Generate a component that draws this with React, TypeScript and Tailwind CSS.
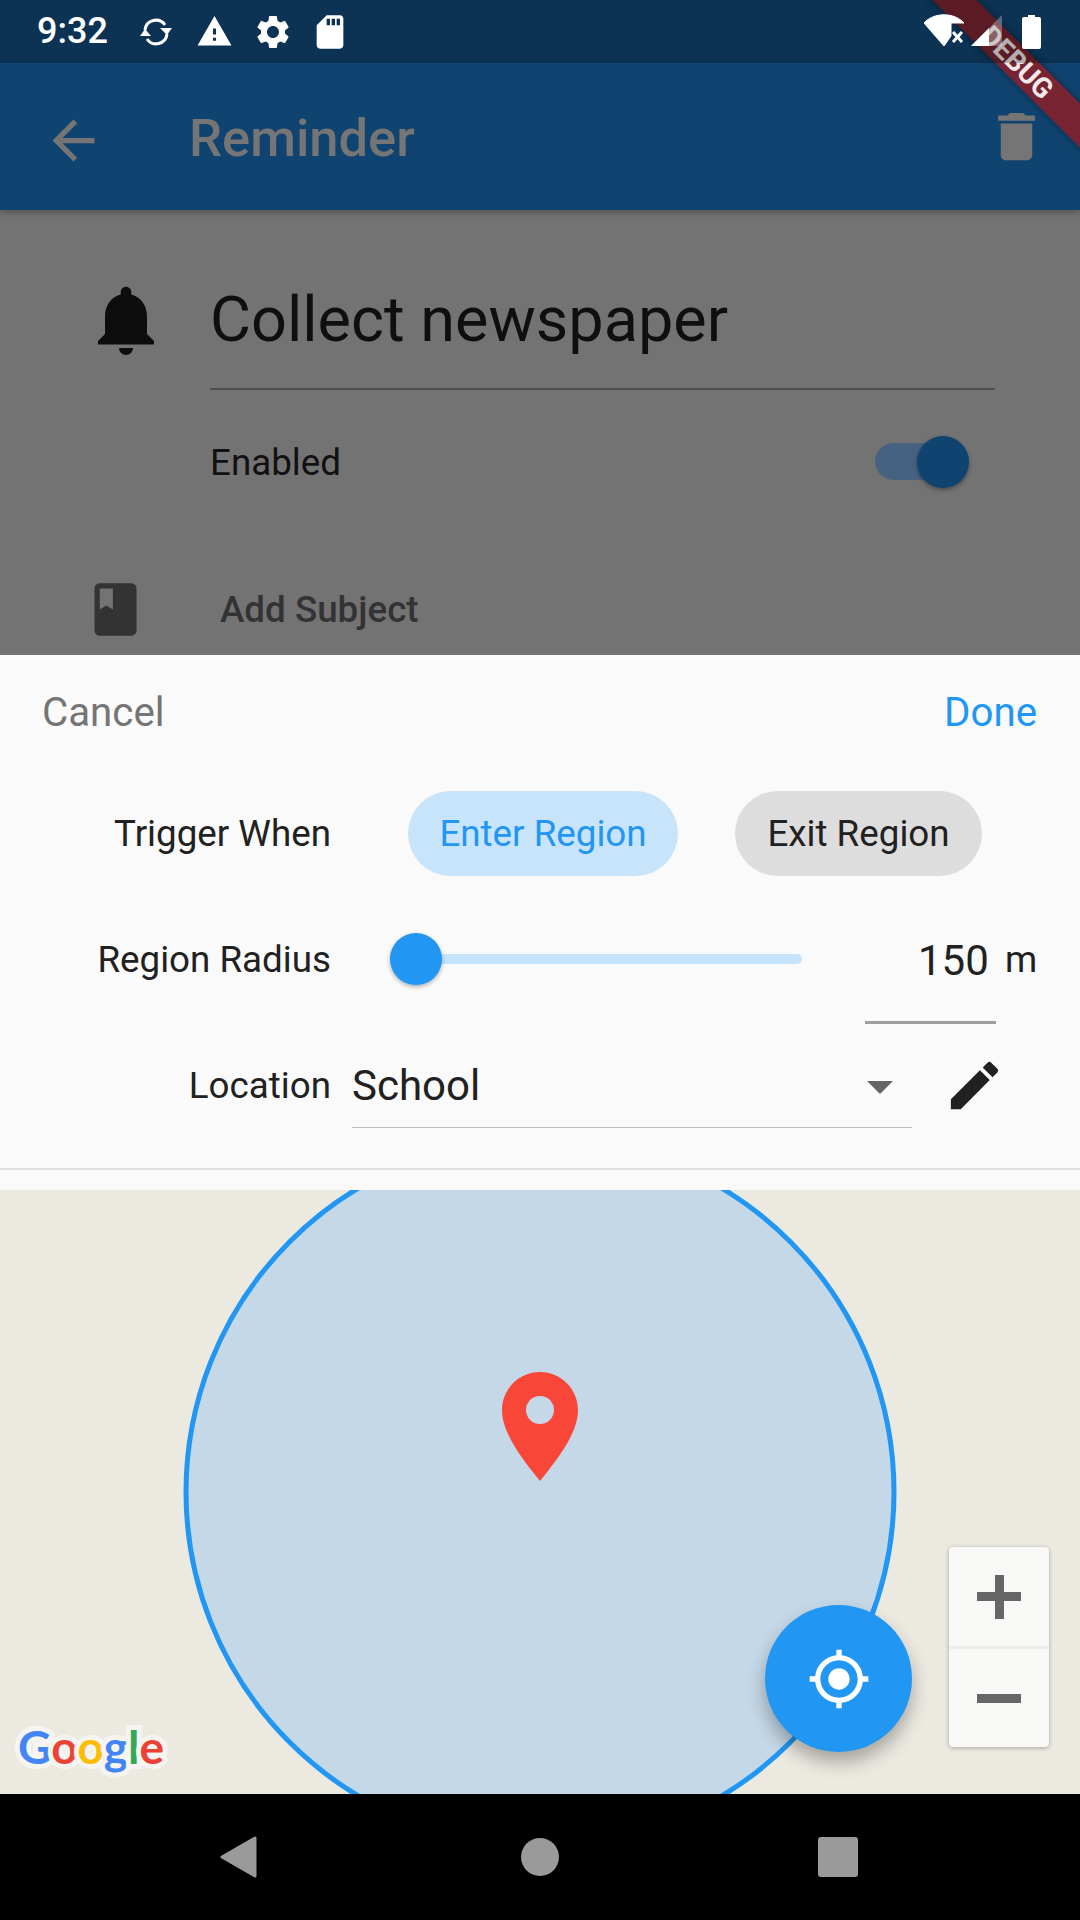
import { MdWarning, MdSettings, MdSdCard, MdArrowBack, MdDelete, MdNotifications, MdBook, MdEdit, MdMyLocation } from "react-icons/md";

const font = { fontFamily: "Roboto, sans-serif" };

function Pill({ label, active }: { label: string; active?: boolean }) {
  return (
    <div className={active ? "h-[85px] w-[270px] rounded-[43px] bg-[#c8e4fb] text-[#2196f3] flex items-center justify-center text-[36.75px]" : "h-[85px] w-[247px] rounded-[43px] bg-[#dddddd] text-[#212121] flex items-center justify-center text-[36.75px]"}>
      {label}
    </div>
  );
}

export default function App() {
  return (
    <div className="relative w-[1080px] h-[1920px] overflow-hidden bg-black flex flex-col" style={font}>
      {/* status bar */}
      <div className="h-[63px] shrink-0 bg-[#104470] flex items-center text-white pl-[37px] pr-[39px]">
        <div className="relative z-30 flex-1 flex items-center h-full">
          <span className="text-[36px] font-medium w-[103px] mt-[-1px]">9:32</span>
          <svg width="32" height="30" viewBox="0 0 32 30" fill="none">
            <path d="M5 13 A11 11 0 0 1 25 8" stroke="#fff" strokeWidth="3" />
            <path d="M20 11 H32 L27 18 Z" fill="#fff" />
            <path d="M27 17 A11 11 0 0 1 7 22" stroke="#fff" strokeWidth="3" />
            <path d="M0 19 H11 L5 12 Z" fill="#fff" />
          </svg>
          <MdWarning className="text-[37px] ml-[24px]" />
          <MdSettings className="text-[40px] ml-[20px]" />
          <MdSdCard className="text-[40px] ml-[17px]" />
          <div className="flex-1" />
          <svg width="40" height="33" viewBox="0 0 40 33" className="mt-[-3px]"><path d="M0 9 C10 -2 30 -2 40 9 L27 9 L27 22 L20 32 Z" fill="#fff" strokeLinejoin="round" stroke="#fff" strokeWidth="1" /><path d="M29 18 L38 28 M38 18 L29 28" stroke="#fff" strokeWidth="3" /></svg>
          <svg width="31" height="32" viewBox="0 0 31 32" className="ml-[7px] mt-[-1px]"><path d="M0 31 L31 0 V31 Z" fill="#fff" fillOpacity="0.3" /><path d="M0 31 L18 13 V31 Z" fill="#fff" /></svg>
          <svg width="19" height="34" viewBox="0 0 19 34" className="ml-[20px]"><path d="M6 0 H13 V2 H17 Q19 2 19 4 V32 Q19 34 17 34 H2 Q0 34 0 32 V4 Q0 2 2 2 H6 Z" fill="#fff" /></svg>
        </div>
      </div>
      {/* app bar */}
      <div className="h-[147px] shrink-0 bg-[#104470] flex items-center pl-[42px] pr-[32px] text-[#757575] relative z-10 shadow-[0_3px_6px_rgba(0,0,0,0.25)]">
        <MdArrowBack className="text-[63px] mt-[8px]" />
        <span className="ml-[84px] text-[52.5px] font-medium mt-[4px]">Reminder</span>
        <div className="flex-1" />
        <MdDelete className="text-[63px]" />
      </div>
      {/* body */}
      <div className="h-[445px] shrink-0 bg-[#737373] flex flex-col relative">
        <div className="flex items-start pl-[84px] pr-[85px]">
          <MdNotifications className="text-[84px] text-[#0d0d0d] shrink-0 mt-[68px]" />
          <div className="ml-[42px] flex-1 border-b-[2px] border-[#4f4f4f] h-[180px] text-[63px] text-[#0f0f0f] leading-[62px] pt-[79px]">Collect newspaper</div>
        </div>
        <div className="flex items-center pl-[210px] pr-[118px] mt-[27px] h-[88px]">
          <span className="text-[36.75px] text-[#111111] pt-[4px]">Enabled</span>
          <div className="flex-1" />
          <div className="relative w-[87px] h-[37px]">
            <div className="absolute left-0 top-0 w-[87px] h-[37px] rounded-[19px] bg-[#476280]" />
            <div className="absolute right-[-7px] top-[-7px] w-[52px] h-[52px] rounded-full bg-[#104470] shadow-[0_2px_4px_rgba(0,0,0,0.35)]" />
          </div>
        </div>
        <div className="flex items-center pl-[84px] mt-[73px] h-[63px] text-[#333333]">
          <MdBook className="text-[63px]" />
          <span className="ml-[73px] text-[36.75px] font-medium">Add Subject</span>
        </div>
      </div>
      {/* sheet */}
      <div className="h-[535px] shrink-0 bg-[#fafafa] flex flex-col">
        <div className="flex justify-between items-center pl-[42px] pr-[43px] pt-[2px] h-[114px] text-[40.25px] shrink-0">
          <span className="text-[#757575]">Cancel</span>
          <span className="text-[#2196f3]">Done</span>
        </div>
        <div className="flex items-center h-[85px] mt-[22px] shrink-0">
          <span className="w-[331px] text-right text-[36.75px] text-[#212121]">Trigger When</span>
          <div className="ml-[77px] flex gap-[57px]">
            <Pill label="Enter Region" active />
            <Pill label="Exit Region" />
          </div>
        </div>
        <div className="flex items-center h-[84px] mt-[42px] shrink-0 relative">
          <span className="w-[331px] text-right text-[36.75px] text-[#212121]">Region Radius</span>
          <div className="ml-[59px] relative w-[412px] h-[10px] rounded-[5px] bg-[#c5e3fb] -mt-[2px]">
            <div className="absolute left-0 top-[-21px] w-[52px] h-[52px] rounded-full bg-[#2196f3] shadow-[0_2px_4px_rgba(0,0,0,0.3)]" />
          </div>
          <div className="ml-[116px] w-[68px] text-right text-[42px] text-[#212121]">150</div>
          <div className="ml-[19px] text-[36.75px] text-[#212121]">m</div>
          <div className="absolute left-[865px] top-[103px] w-[131px] h-[3px] bg-[#9e9e9e]" />
        </div>
        <div className="flex items-center h-[84px] mt-[41px] shrink-0">
          <span className="w-[331px] text-right text-[36.75px] text-[#212121] pt-[2px]">Location</span>
          <div className="ml-[21px] w-[560px] h-[84px] border-b-[1px] border-[#bdbdbd] flex items-center text-[42px] text-[#212121] relative -mb-[1px]">
            School
            <div className="absolute left-[515px] top-[37px] w-0 h-0 border-x-[13px] border-x-transparent border-t-[13px] border-t-[#666666]" />
          </div>
          <MdEdit className="text-[63px] text-[#212121] ml-[31px]" />
        </div>
        <div className="mt-[41px] h-[2px] bg-[#e0e0e0] shrink-0" />
      </div>
      {/* map */}
      <div className="relative h-[604px] shrink-0 bg-[#ece9e1] overflow-hidden">
        <svg width="1080" height="604" viewBox="0 0 1080 604" className="absolute left-0 top-0">
          <circle cx="540" cy="302" r="354" fill="#c5d8e7" stroke="#2196f3" strokeWidth="5" />
          <path d="M540 182 C561 182 578 199 578 220 C578 244 556 271 540 291 C524 271 502 244 502 220 C502 199 519 182 540 182 Z" fill="#f84638" />
          <circle cx="540" cy="220" r="14" fill="#c5d8e7" />
        </svg>
        <div className="absolute left-[18px] top-[527px] text-[46px] font-bold leading-[60px] [paint-order:stroke] [-webkit-text-stroke:10px_#f5f4f0]" style={{ fontFamily: "Lato, sans-serif" }}>
          <span className="text-[#4285f4]">G</span><span className="text-[#ea4335]">o</span><span className="text-[#fbbc05]">o</span><span className="text-[#4285f4]">g</span><span className="text-[#34a853]">l</span><span className="text-[#ea4335]">e</span>
        </div>
        <div className="absolute left-[765px] top-[415px] w-[147px] h-[147px] rounded-full bg-[#2196f3] flex items-center justify-center text-white shadow-[0_10px_18px_rgba(0,0,0,0.3)]">
          <MdMyLocation className="text-[64px]" />
        </div>
        <div className="absolute left-[949px] top-[357px] w-[100px] h-[200px] rounded-[4px] bg-[#f8f8f6] shadow-[0_1px_4px_rgba(0,0,0,0.3)] flex flex-col">
          <div className="h-[102px] flex items-center justify-center border-b-[3px] border-[#ececea] relative">
            <div className="w-[44px] h-[9px] bg-[#666666]" />
            <div className="absolute w-[9px] h-[44px] bg-[#666666]" />
          </div>
          <div className="flex-1 flex items-center justify-center">
            <div className="w-[44px] h-[9px] bg-[#666666]" />
          </div>
        </div>
      </div>
      {/* nav */}
      <div className="flex-1 bg-black relative flex items-center">
        <svg width="37" height="42" viewBox="0 0 37 42" className="absolute left-[220px] top-[42px]"><path d="M2 21 L35 2 V40 Z" fill="#9a9a9a" stroke="#9a9a9a" strokeWidth="3" strokeLinejoin="round" /></svg>
        <div className="absolute left-[521px] top-[44px] w-[38px] h-[38px] rounded-full bg-[#9a9a9a]" />
        <div className="absolute left-[818px] top-[43px] w-[40px] h-[40px] rounded-[3px] bg-[#9a9a9a]" />
      </div>
      {/* debug banner, under the status bar's scrim and icons */}
      <div className="absolute left-[867px] top-[47px] w-[300px] h-[31px] rotate-45 bg-[rgba(170,20,20,0.68)] shadow-[0_0_8px_rgba(0,0,0,0.4)] flex items-center justify-center text-white/90 text-[28px] font-bold z-20">DEBUG</div>
      <div className="absolute left-0 top-0 w-full h-[63px] bg-black/25 z-[25]" />
    </div>
  );
}
